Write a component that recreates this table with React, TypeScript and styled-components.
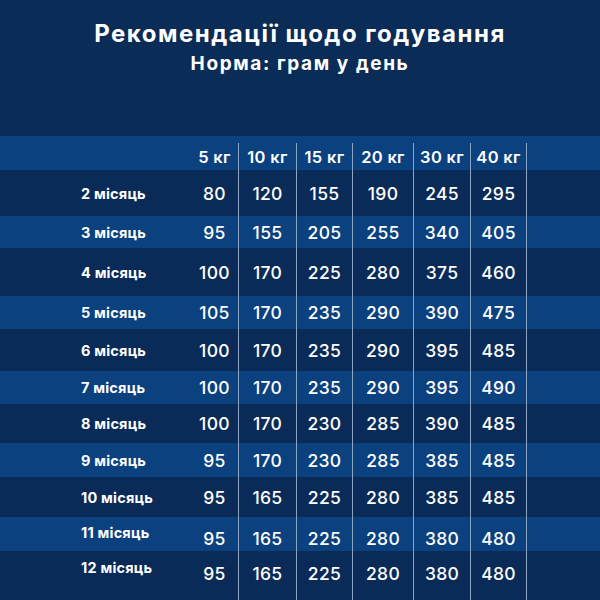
import React from "react";
import styled, { createGlobalStyle } from "styled-components";

const Global = createGlobalStyle`
  html, body { margin: 0; padding: 0; }
  body { background: #0b2c57; font-family: Inter, "Open Sans", sans-serif; }
`;

const COLS = "191px 48px 58px 56px 61px 57px 56px 1fr";

const Page = styled.div`
  width: 600px;
  height: 600px;
  overflow: hidden;
  background: #0b2c57;
  display: flex;
  flex-direction: column;
  color: #ffffff;
`;

const Head = styled.header`
  height: 136px;
  display: flex;
  flex-direction: column;
  align-items: center;
  padding-top: 19px;
  box-sizing: border-box;
`;

const Title = styled.h1`
  margin: 0;
  font-family: Inter, sans-serif;
  font-weight: 700;
  font-size: 24px;
  line-height: 30px;
  letter-spacing: 1.5px;
`;

const Subtitle = styled.h2`
  margin: 3px 0 0;
  font-family: Inter, sans-serif;
  font-weight: 700;
  font-size: 19px;
  line-height: 24px;
  letter-spacing: 1.6px;
`;

const Row = styled.div<{ $h: number; $light: boolean }>`
  display: grid;
  grid-template-columns: ${COLS};
  height: ${(p) => p.$h}px;
  background: ${(p) => (p.$light ? "#0b417f" : "#0a2b58")};
  align-items: center;
`;

const Label = styled.div<{ $lift: number }>`
  padding-left: 81px;
  padding-bottom: ${(p) => p.$lift}px;
  font-family: Inter, sans-serif;
  font-weight: 700;
  font-size: 14.5px;
  letter-spacing: 0.2px;
`;

const Cell = styled.div<{ $line: boolean; $drop: number; $rise: number }>`
  align-self: stretch;
  display: flex;
  align-items: center;
  justify-content: center;
  box-sizing: border-box;
  padding-top: ${(p) => p.$drop}px;
  padding-bottom: ${(p) => p.$rise}px;
  border-right: 1px solid ${(p) => (p.$line ? "#8da3c2" : "transparent")};
  font-family: Inter, sans-serif;
  font-weight: 500;
  font-size: 17.5px;
  letter-spacing: 0.3px;
`;

const HeadCell = styled.div<{ $line: boolean }>`
  align-self: stretch;
  margin-top: 7px;
  display: flex;
  align-items: center;
  justify-content: center;
  box-sizing: border-box;
  border-right: 1px solid ${(p) => (p.$line ? "#8da3c2" : "transparent")};
  font-family: Inter, sans-serif;
  font-weight: 600;
  font-size: 16.5px;
  letter-spacing: 0.3px;
`;

const weights = ["5 кг", "10 кг", "15 кг", "20 кг", "30 кг", "40 кг"];

const rows: { label: string; vals: number[]; h: number; lift: number; drop: number; rise: number }[] = [
  { label: "2 місяць", vals: [80, 120, 155, 190, 245, 295], h: 46, lift: 0, drop: 0, rise: 0 },
  { label: "3 місяць", vals: [95, 155, 205, 255, 340, 405], h: 32, lift: 0, drop: 0, rise: 0 },
  { label: "4 місяць", vals: [100, 170, 225, 280, 375, 460], h: 48, lift: 0, drop: 0, rise: 0 },
  { label: "5 місяць", vals: [105, 170, 235, 290, 390, 475], h: 33, lift: 0, drop: 0, rise: 0 },
  { label: "6 місяць", vals: [100, 170, 235, 290, 395, 485], h: 42, lift: 0, drop: 0, rise: 0 },
  { label: "7 місяць", vals: [100, 170, 235, 290, 395, 490], h: 33, lift: 0, drop: 0, rise: 0 },
  { label: "8 місяць", vals: [100, 170, 230, 285, 390, 485], h: 39, lift: 0, drop: 0, rise: 0 },
  { label: "9 місяць", vals: [95, 170, 230, 285, 385, 485], h: 34, lift: 0, drop: 0, rise: 0 },
  { label: "10 місяць", vals: [95, 165, 225, 280, 385, 485], h: 40, lift: 0, drop: 0, rise: 0 },
  { label: "11 місяць", vals: [95, 165, 225, 280, 380, 480], h: 34, lift: 4, drop: 8, rise: 0 },
  { label: "12 місяць", vals: [95, 165, 225, 280, 380, 480], h: 49, lift: 16, drop: 0, rise: 5 },
];

export default function App() {
  return (
    <Page>
      <Global />
      <Head>
        <Title>Рекомендації щодо годування</Title>
        <Subtitle>Норма: грам у день</Subtitle>
      </Head>
      <Row $h={34} $light>
        <div />
        {weights.map((w) => (
          <HeadCell key={w} $line>
            {w}
          </HeadCell>
        ))}
        <div />
      </Row>
      {rows.map((r, i) => (
        <Row key={r.label} $h={r.h} $light={i % 2 === 1}>
          <Label $lift={r.lift}>{r.label}</Label>
          {r.vals.map((v, j) => (
            <Cell key={j} $line $drop={r.drop} $rise={r.rise}>
              {v}
            </Cell>
          ))}
          <div />
        </Row>
      ))}
    </Page>
  );
}
